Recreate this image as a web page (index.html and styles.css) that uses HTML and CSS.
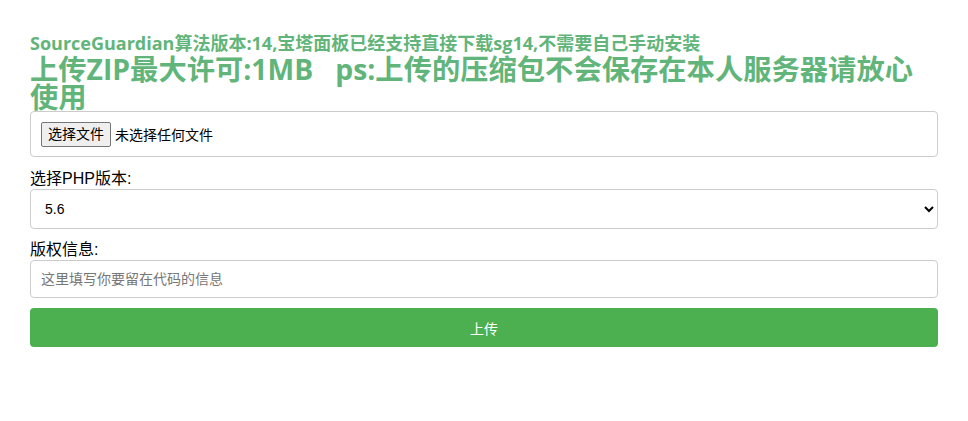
FILE: index.html
```html
<!DOCTYPE html>
<html lang="zh-CN">
<head>
<meta charset="utf-8">
<title>SourceGuardian</title>
<link rel="stylesheet" href="styles.css">
</head>
<body>
<div class="wrap">
  <h3 class="notice">SourceGuardian算法版本:14,宝塔面板已经支持直接下载sg14,不需要自己手动安装</h3>
  <h1 class="title">上传ZIP最大许可:1MB&nbsp;&nbsp;&nbsp;ps:上传的压缩包不会保存在本人服务器请放心使用</h1>
  <form class="form">
    <div class="filebox">
      <label class="filepick"><input class="filehidden" type="file" name="file"><span class="filebtn">选择文件</span><span class="filename">未选择任何文件</span></label>
    </div>
    <label class="lbl" for="ver">选择PHP版本:</label>
    <select class="field sel" id="ver">
      <option>5.6</option>
      <option>7.0</option>
      <option>7.1</option>
      <option>7.2</option>
      <option>7.3</option>
      <option>7.4</option>
    </select>
    <label class="lbl" for="cp">版权信息:</label>
    <input class="field inp" id="cp" type="text" placeholder="这里填写你要留在代码的信息">
    <button class="submit" type="button">上传</button>
  </form>
</div>
</body>
</html>
```
FILE: styles.css
```css
html, body {
  margin: 0;
  padding: 0;
  background: #fff;
}
body {
  font-family: "Liberation Sans", "Noto Sans CJK SC", sans-serif;
  color: #000;
}
.wrap {
  margin: 0 30px;
  padding-top: 34px;
}
.notice {
  margin: 0;
  font-family: "Open Sans", "Noto Sans CJK SC", sans-serif;
  font-size: 18px;
  line-height: 18px;
  font-weight: 700;
  color: #62b57a;
}
.title {
  margin: 3px 0 0;
  padding-right: 10px;
  font-family: "Open Sans", "Noto Sans CJK SC", sans-serif;
  font-size: 28.3px;
  line-height: 28px;
  font-weight: 700;
  color: #62b57a;
}
.form {
  display: flex;
  flex-direction: column;
}
.filebox {
  border: 1px solid #ccc;
  border-radius: 4px;
  height: 44px;
  padding: 0 10px;
  display: flex;
  align-items: center;
  margin-bottom: 12px;
}
.filepick {
  display: flex;
  align-items: center;
  cursor: pointer;
}
.filehidden {
  display: none;
}
.filebtn {
  font-size: 14px;
  line-height: 21px;
  padding: 1px 6px;
  background: #efefef;
  border: 1px solid #767676;
  border-radius: 2px;
  color: #000;
}
.filename {
  font-size: 14px;
  margin-left: 4px;
}
.lbl {
  font-size: 16px;
  line-height: 20px;
  display: block;
}
.field {
  box-sizing: border-box;
  width: 100%;
  border: 1px solid #ccc;
  border-radius: 4px;
  font-family: "Liberation Sans", "Noto Sans CJK SC", sans-serif;
  font-size: 14px;
  background: #fff;
  color: #000;
}
.sel {
  height: 40px;
  padding: 0 8px 0 10px;
  margin-bottom: 11px;
}
.inp {
  height: 38px;
  padding: 0 10px;
}
.inp::placeholder {
  color: #777;
}
.submit {
  margin-top: 10px;
  height: 39px;
  border: 0;
  border-radius: 4px;
  background: #4caf50;
  color: #fff;
  font-family: "Liberation Sans", "Noto Sans CJK SC", sans-serif;
  font-size: 14px;
  cursor: pointer;
}
```
